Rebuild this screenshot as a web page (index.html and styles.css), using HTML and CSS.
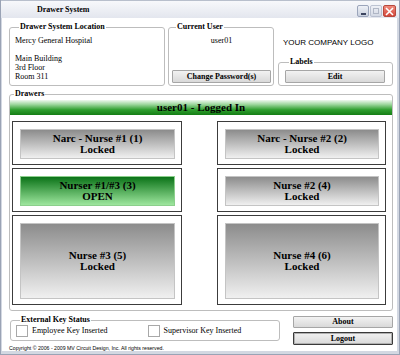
FILE: index.html
```html
<!DOCTYPE html>
<html>
<head>
  <title>Drawer System</title>
  <link rel="stylesheet" href="styles.css">
</head>
<body>
  <div class="window">
    <div class="titlebar">
      <span class="title">Drawer System</span>
      <div class="win-buttons">
        <span class="wbtn min"><span class="dash"></span></span>
        <span class="wbtn max"><span class="square"></span></span>
        <span class="wbtn close">
          <svg width="9" height="9" viewBox="0 0 9 9"><path d="M1 1 L8 8 M8 1 L1 8" stroke="#fff" stroke-width="1.6"/></svg>
        </span>
      </div>
    </div>

    <div class="client">
      <div class="top-row">
        <fieldset class="group location">
          <legend>Drawer System Location</legend>
          <div>Mercy General Hospital</div>
          <div class="blank"></div>
          <div>Main Building</div>
          <div>3rd Floor</div>
          <div>Room 311</div>
        </fieldset>

        <fieldset class="group user">
          <legend>Current User</legend>
          <div class="username">user01</div>
          <button class="btn">Change Password(s)</button>
        </fieldset>

        <div class="right-col">
          <div class="logo">YOUR COMPANY LOGO</div>
          <fieldset class="group labels">
            <legend>Labels</legend>
            <button class="btn">Edit</button>
          </fieldset>
        </div>
      </div>

      <fieldset class="group drawers">
        <legend>Drawers</legend>
        <div class="banner">user01 - Logged In</div>
        <div class="drawer-grid">
          <div class="drawer"><div class="drawer-btn">Narc - Nurse #1 (1)<br>Locked</div></div>
          <div class="drawer"><div class="drawer-btn">Narc - Nurse #2 (2)<br>Locked</div></div>
          <div class="drawer"><div class="drawer-btn open">Nurser #1/#3 (3)<br>OPEN</div></div>
          <div class="drawer"><div class="drawer-btn">Nurse #2 (4)<br>Locked</div></div>
          <div class="drawer"><div class="drawer-btn">Nurse #3 (5)<br>Locked</div></div>
          <div class="drawer"><div class="drawer-btn">Nurse #4 (6)<br>Locked</div></div>
        </div>
      </fieldset>

      <div class="bottom-row">
        <fieldset class="group keys">
          <legend>External Key Status</legend>
          <div class="check"><span class="box"></span>Employee Key Inserted</div>
          <div class="check"><span class="box"></span>Supervisor Key Inserted</div>
        </fieldset>
        <div class="actions">
          <button class="btn">About</button>
          <button class="btn default">Logout</button>
        </div>
      </div>

      <div class="copyright">Copyright &copy; 2006 - 2009 MV Circuit Design, Inc. All rights reserved.</div>
    </div>
  </div>
</body>
</html>
```

FILE: styles.css
```css
* {
  box-sizing: border-box;
}

body {
  margin: 0;
  font-family: "Liberation Serif", "Times New Roman", serif;
  font-size: 8px;
  color: #000;
  background: #fff;
}

.window {
  width: 400px;
  height: 355px;
  display: flex;
  flex-direction: column;
  background: #d3d8e2;
  border-left: 1px solid #9aa3b5;
  border-right: 1px solid #9aa3b5;
  border-bottom: 1px solid #9aa3b5;
}

/* title bar */
.titlebar {
  height: 18px;
  display: flex;
  align-items: flex-start;
  background: linear-gradient(to bottom, #f7f8fb, #e3e6ee);
  border-top: 1px solid #b8bfcc;
}

.title {
  font-weight: bold;
  font-size: 8px;
  line-height: 10px;
  margin: 4px 0 0 36px;
}

.win-buttons {
  margin-left: auto;
  margin-right: 3px;
  margin-top: 4px;
  display: flex;
  gap: 1px;
}

.wbtn {
  width: 12px;
  height: 12px;
  border: 1px solid #9ba5bb;
  border-radius: 2px;
  background: linear-gradient(to bottom, #eef1f7, #c9d0de);
  display: flex;
  align-items: center;
  justify-content: center;
}

.wbtn .dash {
  width: 5px;
  height: 2px;
  background: #3c4560;
  margin-top: 5px;
}

.wbtn.max {
  opacity: 0.6;
}

.wbtn .square {
  width: 6px;
  height: 6px;
  border: 1px solid #8a93a8;
}

.wbtn.close {
  width: 13px;
  border-color: #b5493e;
  background: linear-gradient(to bottom, #f08a7c, #d4473a);
}

/* client area */
.client {
  flex: 1;
  margin: 0 2px 3px 1px;
  background: #fff;
  padding: 4px 4px 0 7px;
  display: flex;
  flex-direction: column;
}

.group {
  margin: 0;
  padding: 0;
  min-width: 0;
  border: 1px solid #bdbdbd;
  border-radius: 3px;
}

.group legend {
  font-weight: bold;
  font-size: 8px;
  line-height: 10px;
  padding: 0 1px;
  margin-left: 4px;
}

.top-row {
  height: 64px;
  display: flex;
  gap: 3px;
}

.location {
  width: 156px;
  padding: 4px 0 0 5px;
  line-height: 9px;
}

.location .blank {
  height: 9px;
}

.user {
  width: 106px;
  padding: 4px 2px 2px 3px;
  display: flex;
  flex-direction: column;
}

.username {
  text-align: center;
  line-height: 9px;
}

.user .btn {
  margin-top: auto;
}

.right-col {
  flex: 1;
  margin-left: 1px;
  display: flex;
  flex-direction: column;
}

.logo {
  font-family: "Liberation Sans", Arial, sans-serif;
  font-size: 8px;
  line-height: 8px;
  margin: 17px 0 0 5px;
}

.labels {
  margin-top: auto;
  height: 29px;
  padding: 3px 7px 0 6px;
}

.btn {
  display: block;
  width: 100%;
  height: 13px;
  padding: 0;
  font-family: "Liberation Serif", "Times New Roman", serif;
  font-weight: bold;
  font-size: 8px;
  line-height: 11px;
  color: #000;
  background: linear-gradient(to bottom, #f2f2f2, #d9d9d9);
  border: 1px solid #a6a6a6;
  border-radius: 1px;
}

/* drawers */
.drawers {
  margin-top: 3px;
  padding: 1px 0 5px 0;
}

.banner {
  height: 15px;
  text-align: center;
  font-weight: bold;
  font-size: 11px;
  line-height: 15px;
  background: linear-gradient(to bottom, #eef8ee 0%, #9bd69b 30%, #2f9f2f 65%, #147d14 100%);
}

.drawer-grid {
  margin-top: 6px;
  padding: 0 6px 0 2px;
  display: grid;
  grid-template-columns: 170px 169px;
  grid-template-rows: 44px 44px 90px;
  column-gap: 35px;
  row-gap: 3px;
}

.drawer {
  border: 1px solid #3c3c3c;
  padding: 7px 6px 5px 7px;
  display: flex;
}

.drawer-btn {
  flex: 1;
  display: flex;
  align-items: center;
  justify-content: center;
  text-align: center;
  font-weight: bold;
  font-size: 11px;
  line-height: 11px;
  border: 1px solid #c4c4c4;
  background: linear-gradient(to bottom, #8c8c8c, #f0f0f0);
}

.drawer-btn.open {
  border-color: #8ccf8c;
  background: linear-gradient(to bottom, #0b7318, #9ee69e);
}

/* bottom */
.bottom-row {
  display: flex;
  justify-content: space-between;
}

.keys {
  width: 270px;
  height: 26px;
  margin: 4px 0 0 1px;
  padding: 0 0 0 5px;
  display: flex;
  align-items: flex-start;
}

.check {
  width: 132px;
  display: flex;
  align-items: center;
  gap: 4px;
  line-height: 12px;
}

.box {
  width: 12px;
  height: 12px;
  border: 1px solid #a8a8a8;
  background: #fff;
}

.actions {
  width: 100px;
  margin-top: 5px;
  display: flex;
  flex-direction: column;
  gap: 4px;
}

.actions .btn {
  height: 12px;
  line-height: 10px;
}

.btn.default {
  height: 13px;
  border: 1px solid #3a3a3a;
  box-shadow: inset 0 0 0 1px #b0b0b0;
}

.copyright {
  font-family: "Liberation Sans", Arial, sans-serif;
  font-size: 5.2px;
  line-height: 6px;
  margin-top: 0;
}
```
